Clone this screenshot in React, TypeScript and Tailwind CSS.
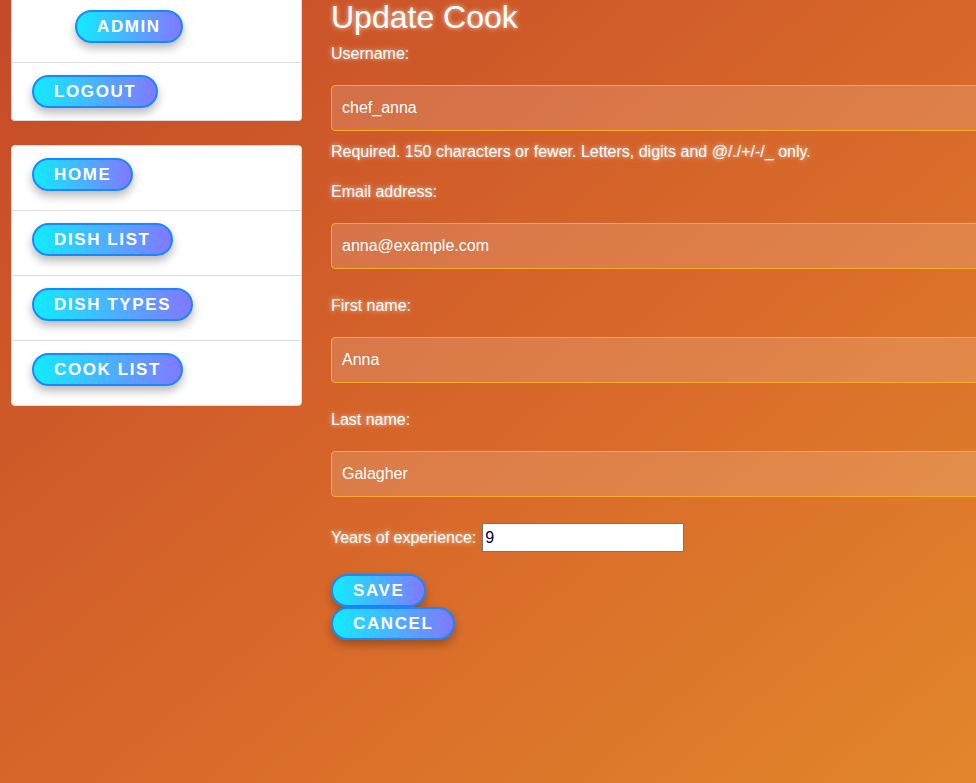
import React from 'react';

const PillButton: React.FC<{ label: string; className?: string }> = ({ label, className = '' }) => (
  <button
    className={`h-[33px] rounded-full border-2 border-[#1a86ff] bg-[linear-gradient(90deg,#12ebff,#8179ff)] px-[20px] text-[17px] font-bold uppercase leading-none tracking-[1.6px] text-white shadow-[0_5px_10px_rgba(0,0,0,0.28)] ${className}`}
  >
    {label}
  </button>
);

const Field: React.FC<{ label: string; value: string; first?: boolean }> = ({ label, value, first }) => (
  <>
    <label className={`block h-6 leading-6 ${first ? 'mt-[6px]' : 'mt-[25px]'}`}>{label}</label>
    <div className="mt-[19px] flex h-[46px] w-[700px] items-center rounded border border-[#f7ad2a] bg-white/15 pl-[10px] [text-shadow:none]">
      {value}
    </div>
  </>
);

const App: React.FC = () => {
  const navItems = ['Home', 'Dish list', 'Dish types', 'Cook list'];

  return (
    <div className="flex h-[783px] w-[976px] overflow-hidden bg-[linear-gradient(140deg,#c54a28,#d8692a_55%,#e2862b)] font-['Liberation_Sans',Arial,sans-serif] text-base text-white">
      {/* Sidebar */}
      <aside className="ml-[11px] w-[291px] shrink-0">
        <div className="rounded-b border border-t-0 border-[#dddddd] bg-white">
          <div className="h-[63px] border-b border-[#dddddd] pt-[10px] pl-[63px]">
            <PillButton label="Admin" />
          </div>
          <div className="h-[57px] pt-[12px] pl-[20px]">
            <PillButton label="Logout" />
          </div>
        </div>

        <div className="mt-[24px] rounded border border-[#dddddd] bg-white">
          {navItems.map((item, i) => (
            <div
              key={item}
              className={`pt-[12px] pl-[20px] ${i < navItems.length - 1 ? 'h-[65px] border-b border-[#dddddd]' : 'h-[64px]'}`}
            >
              <PillButton label={item} />
            </div>
          ))}
        </div>
      </aside>

      {/* Form */}
      <main className="ml-[29px] flex-1 [text-shadow:0_0_5px_rgba(255,255,255,0.75)]">
        <h1 className="mt-[-1px] h-[37px] text-[32px] leading-[37px] font-normal">Update Cook</h1>

        <Field label="Username:" value="chef_anna" first />
        <p className="mt-[9px] h-6 leading-6">Required. 150 characters or fewer. Letters, digits and @/./+/-/_ only.</p>

        <label className="mt-[16px] block h-6 leading-6">Email address:</label>
        <div className="mt-[19px] flex h-[46px] w-[700px] items-center rounded border border-[#f7ad2a] bg-white/15 pl-[10px] [text-shadow:none]">
          anna@example.com
        </div>

        <Field label="First name:" value="Anna" />
        <Field label="Last name:" value="Galagher" />

        <div className="mt-[26px] flex h-[29px] items-center gap-[6px]">
          <span>Years of experience:</span>
          <input
            type="number"
            defaultValue={9}
            className="h-[29px] w-[202px] border border-[#767676] bg-white pl-[2px] text-[16px] text-[#000033] [text-shadow:none] outline-none"
          />
        </div>

        <div className="mt-[22px] flex flex-col items-start [text-shadow:none]">
          <PillButton label="Save" />
          <PillButton label="Cancel" />
        </div>
      </main>
    </div>
  );
};

export default App;
